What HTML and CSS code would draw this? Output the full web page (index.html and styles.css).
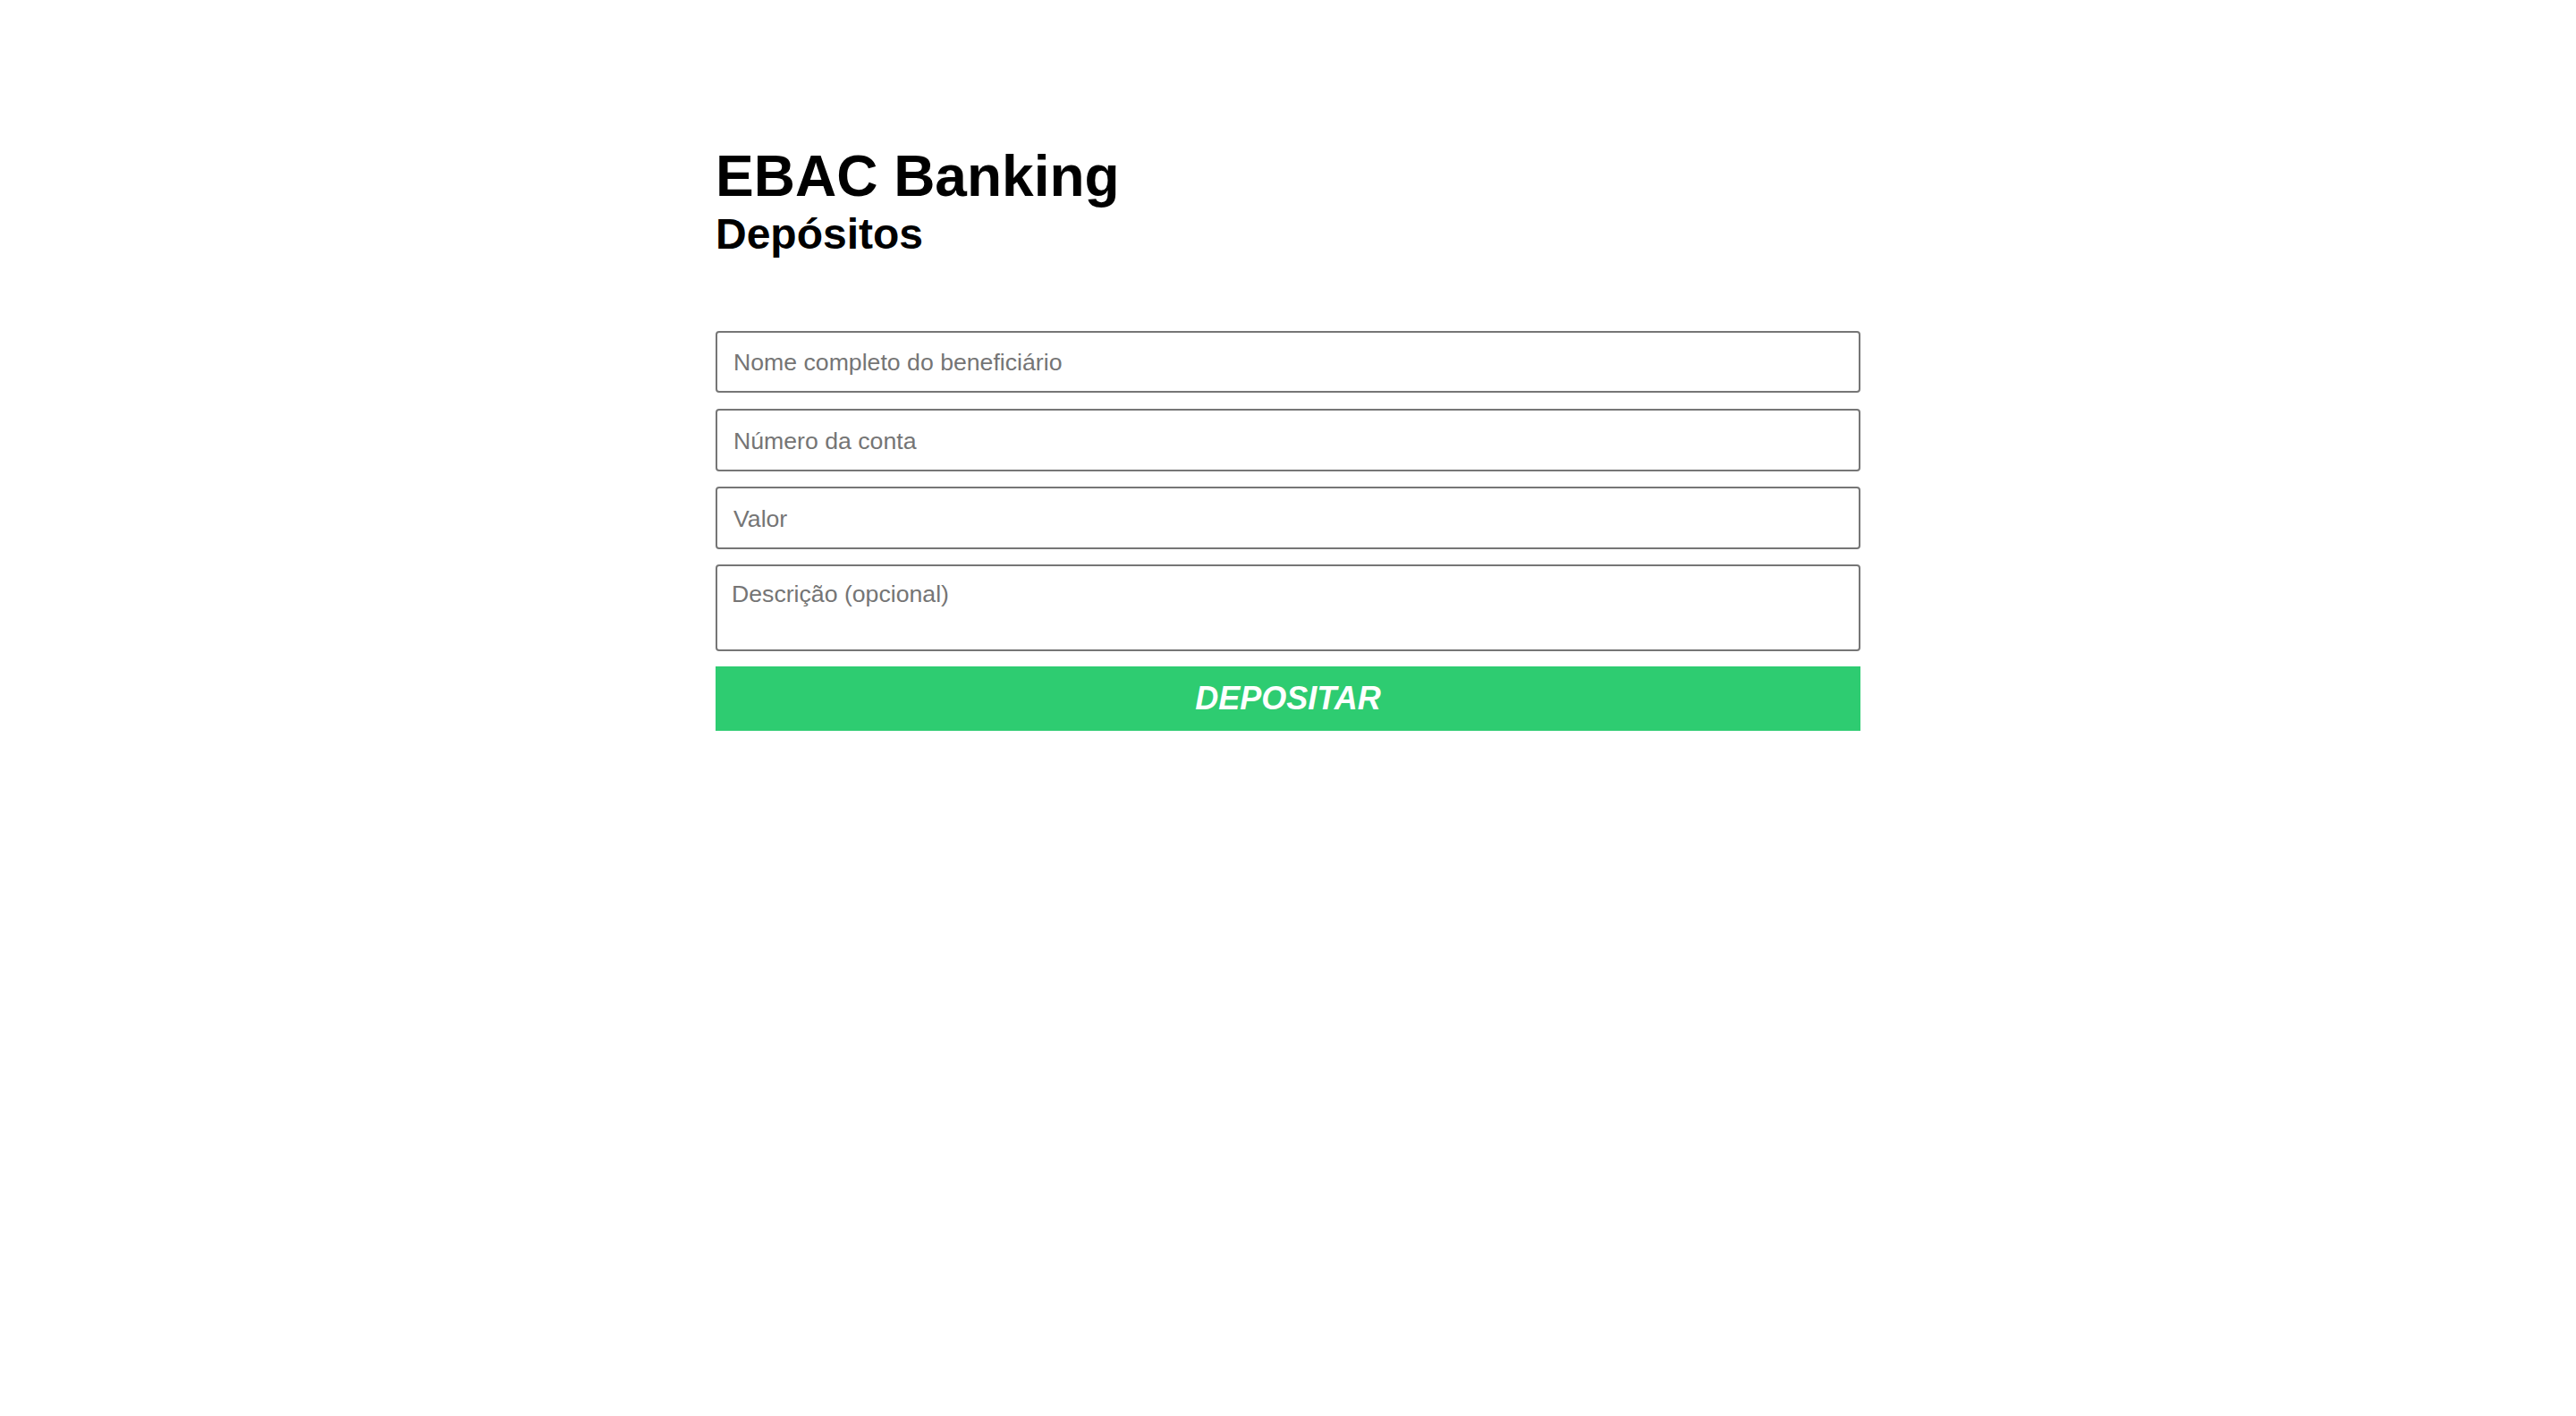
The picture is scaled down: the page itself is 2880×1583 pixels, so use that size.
FILE: index.html
```html
<!DOCTYPE html>
<html lang="pt-BR">
<head>
<meta charset="utf-8">
<title>EBAC Banking</title>
<link rel="stylesheet" href="styles.css">
</head>
<body>
<div class="container">
  <header class="header">
    <h1 class="title">EBAC Banking</h1>
    <h2 class="subtitle">Depósitos</h2>
  </header>
  <form class="form">
    <input class="field" type="text" placeholder="Nome completo do beneficiário">
    <input class="field" type="text" placeholder="Número da conta">
    <input class="field" type="text" placeholder="Valor">
    <textarea class="field field-area" placeholder="Descrição (opcional)"></textarea>
    <button class="submit" type="submit">Depositar</button>
  </form>
</div>
</body>
</html>
```

FILE: styles.css
```css
* {
  box-sizing: border-box;
}

body {
  margin: 0;
  background: #ffffff;
  font-family: "Liberation Sans", Arial, Helvetica, sans-serif;
  color: #000000;
}

.container {
  width: 1280px;
  margin: 0 auto;
  padding-top: 160px;
}

.header {
  display: flex;
  flex-direction: column;
}

.title {
  margin: 0;
  font-size: 64px;
  font-weight: 700;
  line-height: normal;
}

.subtitle {
  margin: 0;
  font-size: 48px;
  font-weight: 700;
  line-height: normal;
}

.form {
  margin-top: 80.5px;
  display: flex;
  flex-direction: column;
}

.field {
  display: block;
  width: 100%;
  height: 69.8px;
  margin: 0 0 17.5px 0;
  padding: 3px 18px 0 18px;
  border: 2px solid #767676;
  border-radius: 4px;
  background: #ffffff;
  font-family: "Liberation Sans", Arial, Helvetica, sans-serif;
  font-size: 26.67px;
  color: #000000;
  outline: none;
}

.field::placeholder {
  color: #757575;
  opacity: 1;
}

.field-area {
  height: 97px;
  margin-bottom: 16.3px;
  padding: 15.5px 16px 0 16px;
  resize: none;
  line-height: normal;
}

.submit {
  display: block;
  width: 100%;
  height: 72.7px;
  margin: 0;
  padding: 0;
  border: none;
  background: #2ecc71;
  color: #ffffff;
  font-family: "Liberation Sans", Arial, Helvetica, sans-serif;
  font-size: 36px;
  font-weight: 700;
  font-style: italic;
  text-transform: uppercase;
  cursor: pointer;
}
```
